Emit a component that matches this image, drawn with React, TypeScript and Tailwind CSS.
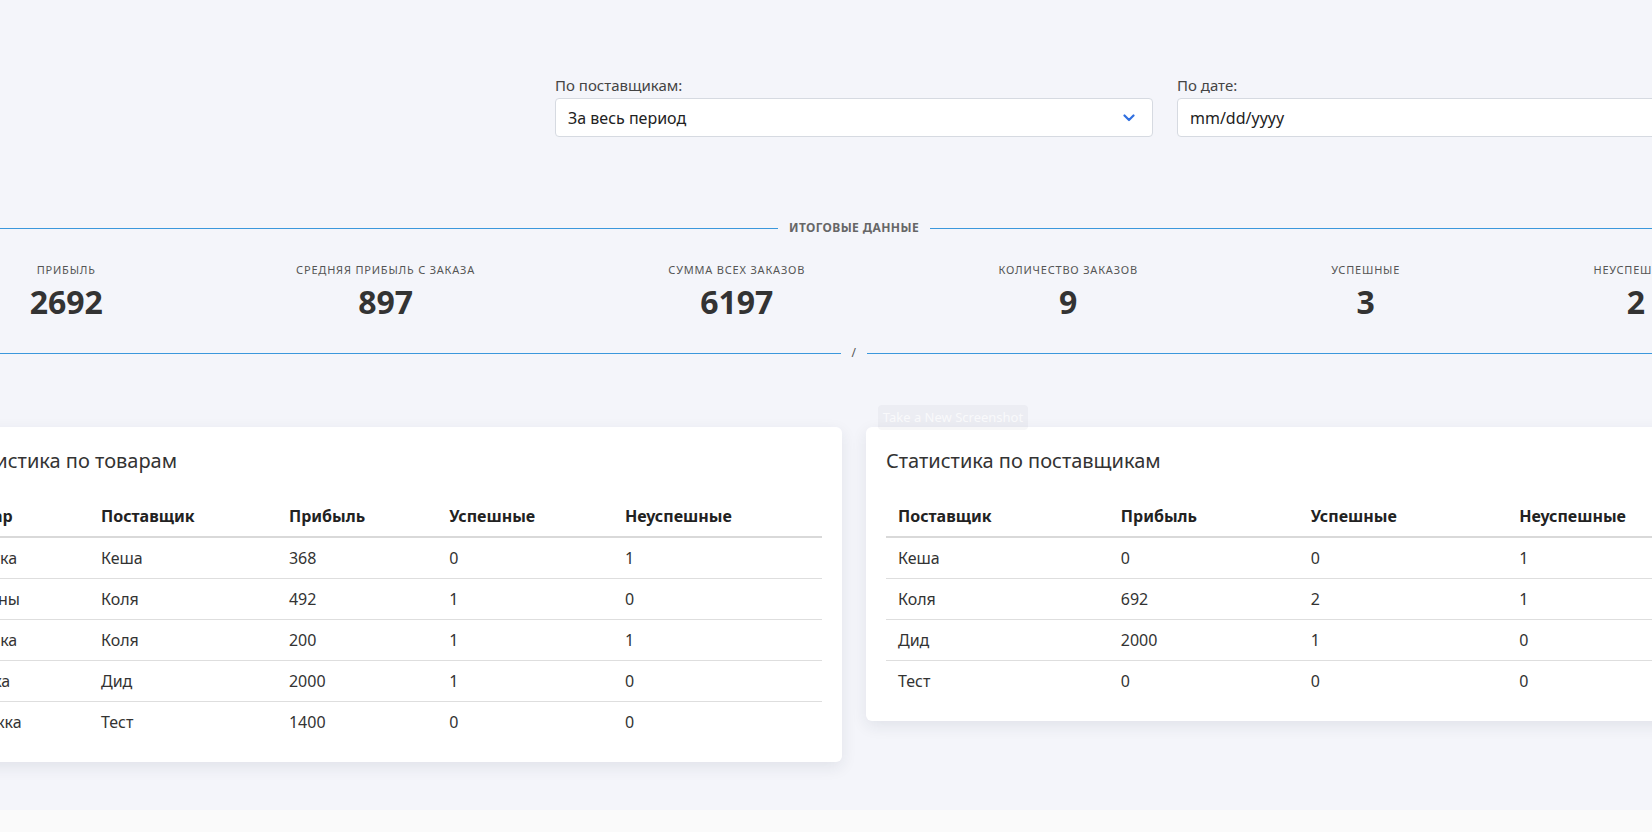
import React from "react";

type Stat = { label: string; value: string };

const stats: Stat[] = [
  { label: "Прибыль", value: "2692" },
  { label: "Средняя прибыль с заказа", value: "897" },
  { label: "Сумма всех заказов", value: "6197" },
  { label: "Количество заказов", value: "9" },
  { label: "Успешные", value: "3" },
  { label: "Неуспешные", value: "2" },
];

const products = [
  ["Куртка", "Кеша", "368", "0", "1"],
  ["Штаны", "Коля", "492", "1", "0"],
  ["Блузка", "Коля", "200", "1", "1"],
  ["Кепка", "Дид", "2000", "1", "0"],
  ["Кружка", "Тест", "1400", "0", "0"],
];

const suppliers = [
  ["Кеша", "0", "0", "1"],
  ["Коля", "692", "2", "1"],
  ["Дид", "2000", "1", "0"],
  ["Тест", "0", "0", "0"],
];

function Divider({ children }: { children: React.ReactNode }) {
  return (
    <div className="flex items-center">
      <div className="h-px flex-1 bg-[#3b98dc]" />
      <div className="px-[11px] text-[12px] leading-4 font-bold uppercase tracking-[0.4px] text-[#666]">{children}</div>
      <div className="h-px flex-1 bg-[#3b98dc]" />
    </div>
  );
}

function StatCard({ title, head, rows, firstWidth }: { title: string; head: string[]; rows: string[][]; firstWidth?: string }) {
  return (
    <div className="self-start rounded-md bg-white p-5 shadow-[0_5px_16px_rgba(30,40,70,0.09)]">
      <h2 className="mb-[21px] text-[20px] leading-7 text-[#333]">{title}</h2>
      <table className="w-full text-[16px] text-[#333]">
        <thead>
          <tr className="border-b-2 border-[#d9d9d9] text-left">
            {head.map((h, i) => (
              <th key={h} className={`px-3 py-2 leading-6 font-bold text-[#222] ${i === 0 && firstWidth ? firstWidth : ""}`}>{h}</th>
            ))}
          </tr>
        </thead>
        <tbody>
          {rows.map((r, i) => (
            <tr key={i} className={i < rows.length - 1 ? "border-b border-[#dedede]" : ""}>
              {r.map((c, j) => (
                <td key={j} className="px-3 py-2 leading-6">{c}</td>
              ))}
            </tr>
          ))}
        </tbody>
      </table>
    </div>
  );
}

export default function App() {
  return (
    <div className="min-h-[832px] overflow-hidden bg-[#fafafa]" style={{ fontFamily: '"Noto Sans", "Open Sans", sans-serif' }}>
      <main className="relative h-[810px] overflow-hidden bg-[#f4f5fa]">
        <div className="-ml-[67px] w-[1842px]">
          <div className="grid grid-cols-3 gap-6 pt-[75px]">
            <div />
            <div>
              <div className="mb-[3px] text-[15px] leading-5 text-[#444]">По поставщикам:</div>
              <div className="flex h-[39px] items-center justify-between rounded border border-[#d6dae1] bg-white pr-[17px] pl-3 text-[16px] text-[#222]">
                <span>За весь период</span>
                <svg width="12" height="8" viewBox="0 0 12 8" fill="none">
                  <path d="M1.5 1.5L6 6L10.5 1.5" stroke="#2f6fe0" strokeWidth="2.2" strokeLinecap="round" strokeLinejoin="round" />
                </svg>
              </div>
            </div>
            <div>
              <div className="mb-[3px] text-[15px] leading-5 text-[#444]">По дате:</div>
              <div className="flex h-[39px] items-center rounded border border-[#d6dae1] bg-white px-3 text-[16px] text-[#222]">
                mm/dd/yyyy
              </div>
            </div>
          </div>

          <div className="mt-[83px]">
            <Divider>Итоговые данные</Divider>
          </div>

          <div className="mt-[26px] flex justify-around">
            {stats.map((s) => (
              <div key={s.label} className="flex flex-col items-center">
                <div className="text-[11px] leading-4 uppercase tracking-[0.8px] text-[#555]">{s.label}</div>
                <div className="mt-[5px] text-[32px] leading-[38px] font-bold text-[#333]">{s.value}</div>
              </div>
            ))}
          </div>

          <div className="mt-6">
            <Divider>
              <span className="font-normal text-[#555]">/</span>
            </Divider>
          </div>

          <div className="mt-[66px] grid grid-cols-2 gap-6">
            <StatCard
              title="Статистика по товарам"
              head={["Товар", "Поставщик", "Прибыль", "Успешные", "Неуспешные"]}
              rows={products}
              firstWidth="w-[136px]"
            />
            <StatCard title="Статистика по поставщикам" head={["Поставщик", "Прибыль", "Успешные", "Неуспешные"]} rows={suppliers} />
          </div>
        </div>

        <div className="absolute top-[405px] left-[878px] flex h-[25px] w-[150px] items-center justify-center rounded-sm bg-[rgba(20,30,60,0.035)] text-[13px] whitespace-nowrap text-[rgba(255,255,255,0.7)]">
          Take a New Screenshot
        </div>
      </main>
    </div>
  );
}
